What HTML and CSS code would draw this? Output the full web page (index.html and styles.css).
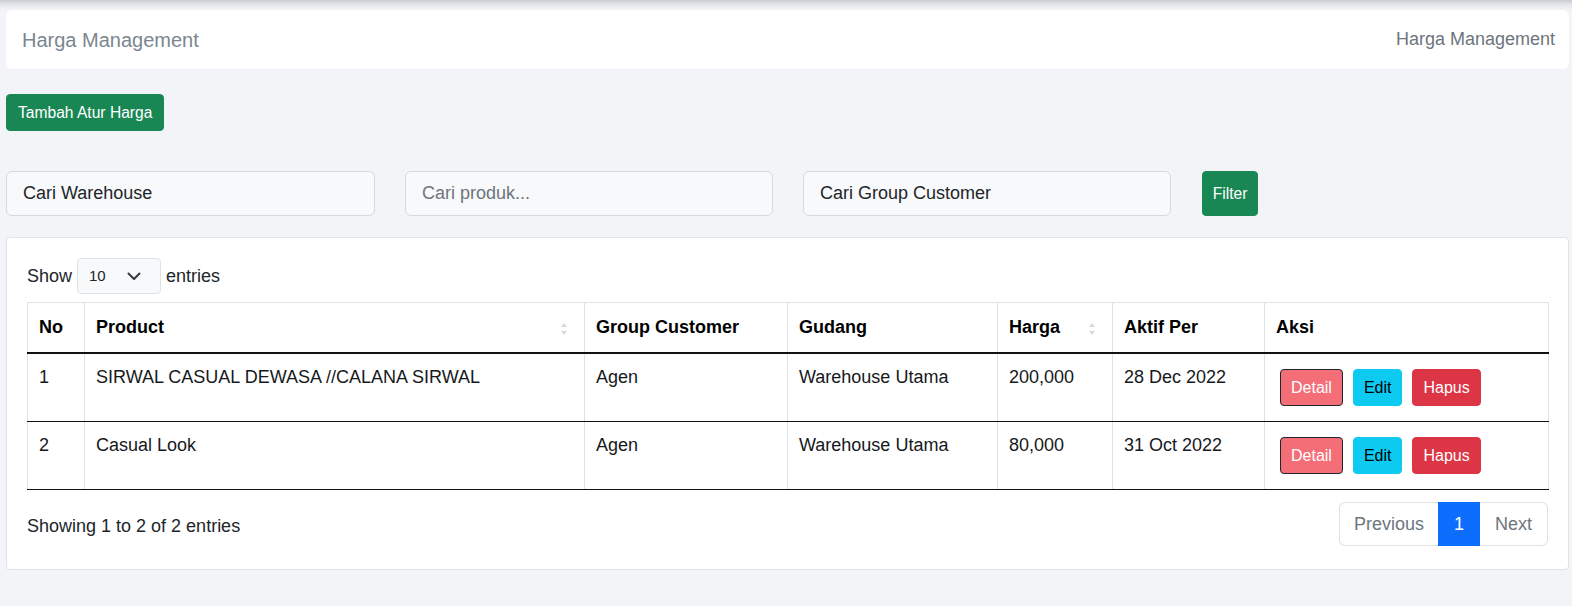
FILE: index.html
```html
<!DOCTYPE html>
<html lang="id">
<head>
<meta charset="utf-8">
<title>Harga Management</title>
<link rel="stylesheet" href="styles.css">
</head>
<body>
<div class="topshade"></div>
<main class="page">
  <header class="topbar">
    <h1 class="title">Harga Management</h1>
    <span class="crumb">Harga Management</span>
  </header>

  <div class="actions">
    <button class="btn btn-green btn-add" type="button">Tambah Atur Harga</button>
  </div>

  <form class="filters">
    <div class="field">Cari Warehouse</div>
    <input class="field field-input" type="text" placeholder="Cari produk...">
    <div class="field">Cari Group Customer</div>
    <button class="btn btn-green btn-filter" type="button">Filter</button>
  </form>

  <section class="card">
    <div class="length">
      <span>Show</span>
      <div class="select">
        <span class="select-value">10</span>
        <svg class="chev" width="14" height="9" viewBox="0 0 14 9"><path d="M1.5 1.5 L7 7 L12.5 1.5" fill="none" stroke="#343a40" stroke-width="2" stroke-linecap="round" stroke-linejoin="round"/></svg>
      </div>
      <span>entries</span>
    </div>

    <table class="dt">
      <colgroup>
        <col style="width:57px">
        <col style="width:500px">
        <col style="width:203px">
        <col style="width:210px">
        <col style="width:115px">
        <col style="width:152px">
        <col style="width:284px">
      </colgroup>
      <thead>
        <tr>
          <th>No</th>
          <th class="sortable">Product<svg class="sort" width="8" height="14" viewBox="0 0 8 14"><path d="M4 1 L7 5 L1 5 Z" fill="#d6d8db"/><path d="M4 13 L7 9 L1 9 Z" fill="#d6d8db"/></svg></th>
          <th>Group Customer</th>
          <th>Gudang</th>
          <th class="sortable">Harga<svg class="sort" width="8" height="14" viewBox="0 0 8 14"><path d="M4 1 L7 5 L1 5 Z" fill="#d6d8db"/><path d="M4 13 L7 9 L1 9 Z" fill="#d6d8db"/></svg></th>
          <th>Aktif Per</th>
          <th>Aksi</th>
        </tr>
      </thead>
      <tbody>
        <tr>
          <td>1</td>
          <td>SIRWAL CASUAL DEWASA //CALANA SIRWAL</td>
          <td>Agen</td>
          <td>Warehouse Utama</td>
          <td>200,000</td>
          <td>28 Dec 2022</td>
          <td><div class="row-actions"><button class="btn btn-detail" type="button">Detail</button><button class="btn btn-edit" type="button">Edit</button><button class="btn btn-hapus" type="button">Hapus</button></div></td>
        </tr>
        <tr>
          <td>2</td>
          <td>Casual Look</td>
          <td>Agen</td>
          <td>Warehouse Utama</td>
          <td>80,000</td>
          <td>31 Oct 2022</td>
          <td><div class="row-actions"><button class="btn btn-detail" type="button">Detail</button><button class="btn btn-edit" type="button">Edit</button><button class="btn btn-hapus" type="button">Hapus</button></div></td>
        </tr>
      </tbody>
    </table>

    <div class="dt-footer">
      <div class="info">Showing 1 to 2 of 2 entries</div>
      <ul class="pagination">
        <li class="pg pg-prev">Previous</li>
        <li class="pg pg-active">1</li>
        <li class="pg pg-next">Next</li>
      </ul>
    </div>
  </section>
</main>
</body>
</html>
```

FILE: styles.css
```css
* { box-sizing: border-box; }

html, body {
  margin: 0;
  padding: 0;
}

body {
  background: #f3f4f7;
  font-family: "Liberation Sans", Arial, sans-serif;
  color: #212529;
  font-size: 18px;
  line-height: 1.5;
}

.topshade {
  height: 10px;
  background: linear-gradient(to bottom, #c9ccd2 0%, #e3e5e9 45%, #f3f4f7 100%);
}

.page {
  padding: 0 3px 0 6px;
}

.topbar {
  height: 59px;
  background: #fff;
  border-radius: 6px;
  display: flex;
  align-items: center;
  justify-content: space-between;
  padding: 0 14px 0 16px;
}

.title {
  margin: 0;
  font-size: 20px;
  font-weight: 400;
  color: #7b8691;
  line-height: 1.2;
}

.crumb {
  font-size: 18px;
  color: #6c757d;
}

.actions {
  margin-top: 25px;
}

.btn {
  font-family: "Liberation Sans", Arial, sans-serif;
  border: 1px solid transparent;
  border-radius: 4px;
  cursor: pointer;
  display: inline-block;
}

.btn-green {
  background: #198754;
  border-color: #198754;
  color: #fff;
}

.btn-add {
  height: 37px;
  padding: 0 11px;
  font-size: 15.6px;
  line-height: 35px;
}

.filters {
  margin: 40px 0 0;
  display: grid;
  grid-template-columns: 369px 368px 368px 57px;
  column-gap: 30px;
}

.field {
  height: 45px;
  border: 1px solid #d6d9de;
  border-radius: 6px;
  background: #f8f9fa;
  padding: 0 16px;
  font-family: "Liberation Sans", Arial, sans-serif;
  font-size: 18px;
  line-height: 43px;
  color: #212529;
  width: 100%;
  margin: 0;
}

.field-input::placeholder {
  color: #6c757d;
  opacity: 1;
}

.btn-filter {
  height: 45px;
  margin-left: 1px;
  padding: 0;
  font-size: 15.6px;
}

.card {
  margin-top: 21px;
  background: #fff;
  border: 1px solid #dfe2e6;
  border-radius: 4px;
  padding: 20px 20px 23px;
}

.length {
  display: flex;
  align-items: center;
  height: 36px;
  font-size: 18px;
}

.select {
  width: 84px;
  height: 36px;
  margin: 0 5px;
  border: 1px solid #dee2e6;
  border-radius: 4px;
  background: #f8f9fa;
  display: flex;
  align-items: center;
  justify-content: space-between;
  padding: 0 19px 0 11px;
}

.select-value {
  font-size: 15px;
  color: #212529;
}

.chev {
  display: block;
}

.dt {
  margin-top: 8px;
  width: 1521px;
  border-collapse: collapse;
  table-layout: fixed;
  border-top: 1px solid #dee2e6;
}

.dt th,
.dt td {
  border-left: 1px solid #dee2e6;
  border-right: 1px solid #dee2e6;
  text-align: left;
  vertical-align: top;
  line-height: 27px;
  font-size: 18px;
}

.dt th {
  font-weight: 700;
  color: #000;
  padding: 11px 11px 11px;
  border-bottom: 2px solid #111;
}

.dt th.sortable {
  position: relative;
}

.sort {
  position: absolute;
  right: 16px;
  top: 19px;
}

.dt td {
  padding: 10px 11px;
  color: #16191c;
  border-bottom: 1px solid #111;
  height: 68px;
}

.row-actions {
  display: flex;
  gap: 10px;
  margin: 5px 0 5px 4px;
}

.row-actions .btn {
  height: 37px;
  padding: 0 10px;
  font-size: 16px;
  line-height: 35px;
}

.btn-detail {
  background: #f46e78;
  border-color: #212529;
  color: #fff;
}

.btn-edit {
  background: #0dcaf0;
  border-color: #0dcaf0;
  color: #000;
}

.btn-hapus {
  background: #dc3545;
  border-color: #dc3545;
  color: #fff;
}

.dt-footer {
  margin-top: 12px;
  display: flex;
  justify-content: space-between;
  align-items: center;
}

.info {
  font-size: 18px;
  padding-top: 4px;
}

.pagination {
  list-style: none;
  margin: 0;
  padding: 0;
  display: flex;
}

.pg {
  height: 44px;
  line-height: 42px;
  font-size: 18px;
  color: #6c757d;
  background: #fff;
  border: 1px solid #dee2e6;
  padding: 0 14px;
}

.pg-prev {
  border-radius: 6px 0 0 6px;
  border-right: 0;
}

.pg-active {
  background: #0d6efd;
  border-color: #0d6efd;
  color: #fff;
  padding: 0 15px;
}

.pg-next {
  border-radius: 0 6px 6px 0;
  border-left: 0;
  padding: 0 15px;
}
```
